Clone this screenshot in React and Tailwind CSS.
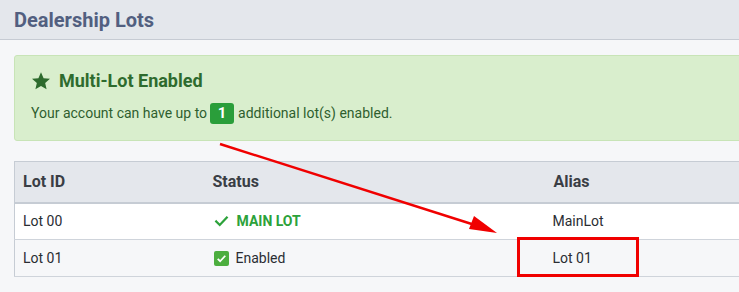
const rows = [
  { id: 'Lot 00', alias: 'MainLot', main: true },
  { id: 'Lot 01', alias: 'Lot 01', main: false },
];

const StarIcon = () => (
  <svg viewBox="0 0 24 24" className="h-[20px] w-[20px]" fill="#2e6b2e">
    <path d="M12 1.5l3.1 7.1 7.7.7-5.8 5.1 1.7 7.6L12 18l-6.7 4 1.7-7.6-5.8-5.1 7.7-.7z" />
  </svg>
);

const CheckIcon = () => (
  <svg viewBox="0 0 16 16" className="h-[14px] w-[15px]" fill="none" stroke="#2ca23a" strokeWidth="2.6" strokeLinecap="square">
    <path d="M2 8.5l4 4L14 4" />
  </svg>
);

const CheckSquare = () => (
  <span className="flex h-[15px] w-[15px] items-center justify-center rounded-[2px] bg-[#4cae3f]">
    <svg viewBox="0 0 16 16" className="h-[11px] w-[11px]" fill="none" stroke="#fff" strokeWidth="2.6">
      <path d="M2.5 8.5l3.5 3.5L13.5 4" />
    </svg>
  </span>
);

const App = () => {
  return (
    <div className="relative h-[292px] w-[739px] overflow-hidden bg-[#f6f7f9] font-['Roboto',sans-serif]">
      <div className="flex h-[40px] items-center border-b border-[#c6cbd3] bg-[#e4e7ec] px-[14px]">
        <h1 className="text-[20px] font-bold text-[#525f80]">Dealership Lots</h1>
      </div>

      <div className="w-[780px] px-[14px] pt-[15px]">
        <div className="rounded-[3px] border border-[#c8e4b7] bg-[#d9eecd] pl-[16px] pr-4 pt-[12px] pb-[16px]">
          <div className="flex h-[25px] items-center gap-[8px]">
            <StarIcon />
            <h2 className="text-[18px] font-bold text-[#2e6b2e]">Multi-Lot Enabled</h2>
          </div>
          <p className="mt-[10px] flex h-[21px] items-center text-[14px] text-[#2f5e2f]">
            Your account can have up to
            <span className="ml-[3px] mr-[4px] flex h-[21px] w-[24px] items-center justify-center rounded-[3px] bg-[#2a9e3a] text-[15px] font-bold text-white">1</span>
            additional lot(s) enabled.
          </p>
        </div>

        <table className="mt-[20px] w-full border-collapse border border-[#c6ccd4] text-[14px] text-[#2a2d33]">
          <thead>
            <tr className="h-[41px] border-b-2 border-[#c6ccd4] bg-[#e4e7ec] text-left text-[16px] font-bold text-[#3a3e45]">
              <th className="w-[189px] px-[8px] font-bold">Lot ID</th>
              <th className="w-[341px] px-[9px] font-bold">Status</th>
              <th className="px-[9px] font-bold">Alias</th>
            </tr>
          </thead>
          <tbody>
            {rows.map((row, i) => (
              <tr key={row.id} className={`h-[37px] border-b border-[#cfd4db] ${i === 0 ? 'bg-white' : 'bg-[#f6f7f9]'}`}>
                <td className="px-[8px]">{row.id}</td>
                <td className="px-[9px]">
                  {row.main ? (
                    <span className="flex items-center gap-[8px] pl-[1px] font-bold text-[#2ca23a]">
                      <CheckIcon />
                      MAIN LOT
                    </span>
                  ) : (
                    <span className="flex items-center gap-[7px] pl-[1px]">
                      <CheckSquare />
                      Enabled
                    </span>
                  )}
                </td>
                <td className="px-[8px]">{row.alias}</td>
              </tr>
            ))}
          </tbody>
        </table>
      </div>

      {/* annotation overlay */}
      <div className="absolute left-[517px] top-[237px] h-[40px] w-[122px] border-[3px] border-[#f00000]" />
      <svg className="pointer-events-none absolute left-0 top-0" width="739" height="292">
        <line x1="220" y1="144" x2="478" y2="226" stroke="#f00000" strokeWidth="2.5" />
        <polygon points="497,233 469,229 474,216" fill="#f00000" />
      </svg>
    </div>
  );
};

export default App;
